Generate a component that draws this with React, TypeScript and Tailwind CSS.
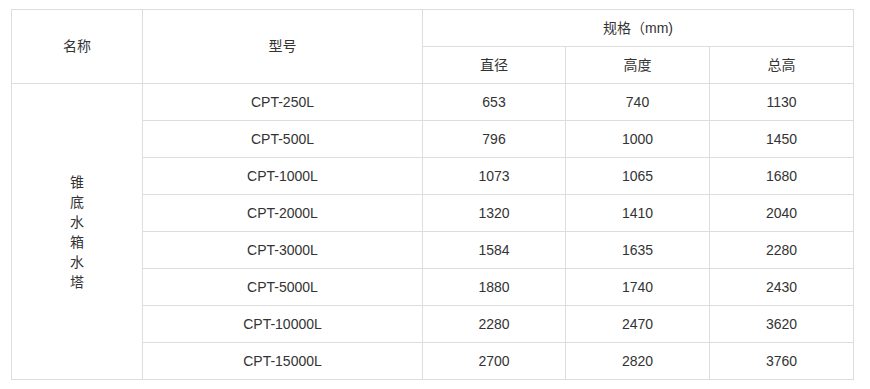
import React from "react";

const rows = [
  ["CPT-250L", "653", "740", "1130"],
  ["CPT-500L", "796", "1000", "1450"],
  ["CPT-1000L", "1073", "1065", "1680"],
  ["CPT-2000L", "1320", "1410", "2040"],
  ["CPT-3000L", "1584", "1635", "2280"],
  ["CPT-5000L", "1880", "1740", "2430"],
  ["CPT-10000L", "2280", "2470", "3620"],
  ["CPT-15000L", "2700", "2820", "3760"],
];

const cell = "border border-[#dddddd] text-center align-middle h-[37px] p-0";

export default function App() {
  return (
    <div
      className="bg-white w-[870px] h-[389px] pt-[9px] pl-[11px] text-[14px] text-[#333333]"
      style={{ fontFamily: '"Liberation Sans", Arial, "Noto Sans CJK SC", sans-serif' }}
    >
      <table className="border-collapse table-fixed w-[843px]">
        <colgroup>
          <col className="w-[131px]" />
          <col className="w-[280px]" />
          <col className="w-[143px]" />
          <col className="w-[144px]" />
          <col className="w-[144px]" />
        </colgroup>
        <tbody>
          <tr>
            <td rowSpan={2} className={cell}>名称</td>
            <td rowSpan={2} className={cell}>型号</td>
            <td colSpan={3} className={cell}>规格（mm)</td>
          </tr>
          <tr>
            <td className={cell}>直径</td>
            <td className={cell}>高度</td>
            <td className={cell}>总高</td>
          </tr>
          {rows.map((r, i) => (
            <tr key={i}>
              {i === 0 && (
                <td rowSpan={8} className={cell + " leading-[20px]"}>
                  {"锥底水箱水塔".split("").map((c, j) => (
                    <div key={j}>{c}</div>
                  ))}
                </td>
              )}
              {r.map((v, k) => (
                <td key={k} className={cell}>{v}</td>
              ))}
            </tr>
          ))}
        </tbody>
      </table>
    </div>
  );
}
